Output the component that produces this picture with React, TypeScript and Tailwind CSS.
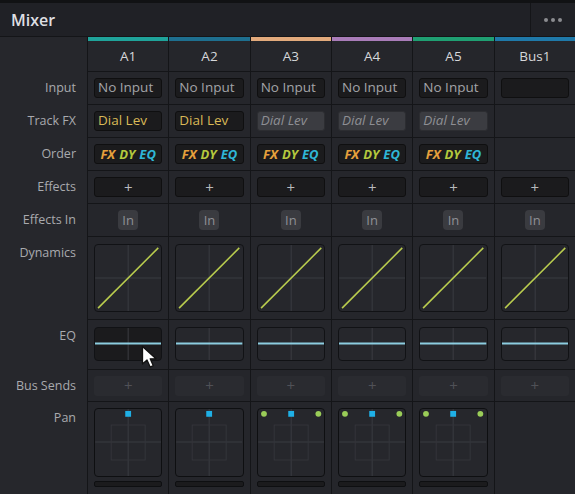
import React from "react"

type Channel = {
  name: string
  color: string
  input: string
  fx: "active" | "bypass" | "none"
  order: boolean
  pan: "mono" | "stereo" | "none"
}

const channels: Channel[] = [
  {name: "A1", color: "#1fa39a", input: "No Input", fx: "active", order: true, pan: "mono"},
  {name: "A2", color: "#1e6f8f", input: "No Input", fx: "active", order: true, pan: "mono"},
  {name: "A3", color: "#e2aa7c", input: "No Input", fx: "bypass", order: true, pan: "stereo"},
  {name: "A4", color: "#a97cb8", input: "No Input", fx: "bypass", order: true, pan: "stereo"},
  {name: "A5", color: "#1f9f72", input: "No Input", fx: "bypass", order: true, pan: "stereo"},
  {name: "Bus1", color: "#1f79a9", input: "", fx: "none", order: false, pan: "none"},
]

const Label = ({text, h}: {text?: string; h: string}) => (
  <div className={`${h} shrink-0`}>
    {text && (
      <div className="h-[32px] flex items-center justify-end pr-[11px] text-[12.5px] text-[#a9aaae]">{text}</div>
    )}
  </div>
)

const Dynamics = () => (
  <svg viewBox="0 0 68 68" className="w-full h-full">
    <line x1="34" y1="0" x2="34" y2="68" stroke="#3b3c42" strokeWidth="1" />
    <line x1="0" y1="34" x2="68" y2="34" stroke="#3b3c42" strokeWidth="1" />
    <line x1="3" y1="65" x2="65" y2="3" stroke="#b9cc4e" strokeWidth="1.6" />
  </svg>
)

const Eq = () => (
  <svg viewBox="0 0 68 34" className="w-full h-full" preserveAspectRatio="none">
    <line x1="34" y1="0" x2="34" y2="34" stroke="#3d3e44" strokeWidth="1" />
    <line x1="0" y1="16.5" x2="68" y2="16.5" stroke="#8ccde0" strokeWidth="2" />
  </svg>
)

const Pan = ({stereo}: {stereo: boolean}) => (
  <svg viewBox="0 0 68 69" className="w-full h-full">
    <line x1="34" y1="0" x2="34" y2="69" stroke="#3b3c42" strokeWidth="1" />
    <line x1="0" y1="34" x2="68" y2="34" stroke="#3b3c42" strokeWidth="1" />
    <rect x="16.5" y="16.5" width="35" height="36" fill="none" stroke="#34353b" strokeWidth="1" />
    <rect x="31" y="2" width="6" height="6" fill="#1fb0e6" />
    {stereo && (
      <>
        <circle cx="6" cy="5" r="3" fill="#9acd58" />
        <circle cx="62" cy="5" r="3" fill="#9acd58" />
      </>
    )}
  </svg>
)

// mouse pointer hovering the A1 EQ box
const Cursor = () => (
  <svg width="17" height="24" viewBox="0 0 17 24" className="absolute left-[141px] top-[345px]">
    <path d="M1.5 1.5 L1.5 19 L6 15 L9.2 22 L12.2 20.6 L9.2 13.8 L15 13.8 Z" fill="#ffffff" stroke="#111" strokeWidth="1.3" strokeLinejoin="round" />
  </svg>
)

const Column = ({c, first}: {c: Channel; first: boolean}) => {
  const cell = "bg-[#25262b] px-[6px] flex flex-col"
  return (
    <div className="flex flex-col gap-px bg-[#141518]">
      <div className="h-[34px] bg-[#25262b] flex flex-col">
        <div className="h-[4px]" style={{backgroundColor: c.color}} />
        <div className="flex-1 flex items-center justify-center text-[13.5px] text-[#d6d7da]">{c.name}</div>
      </div>
      <div className={`${cell} h-[32px] justify-center`}>
        <div className="h-[20px] rounded-[3px] bg-[#1b1b1d] border border-[#0f0f10] flex items-center pl-[3px] text-[13.5px] text-[#a3a4a8] leading-none">
          {c.input}
        </div>
      </div>
      <div className={`${cell} h-[32px] justify-center`}>
        {c.fx === "active" && (
          <div className="h-[20px] rounded-[3px] bg-[#1b1b1d] border border-[#0f0f10] flex items-center pl-[3px] text-[13.5px] text-[#d9b957] leading-none">
            Dial Lev
          </div>
        )}
        {c.fx === "bypass" && (
          <div className="h-[20px] rounded-[3px] bg-[#3b3c41] border border-[#2c2d31] flex items-center pl-[3px] text-[13.5px] italic text-[#8e8f94] leading-none">
            Dial Lev
          </div>
        )}
      </div>
      <div className={`${cell} h-[32px] justify-center`}>
        {c.order && (
          <div className="h-[20px] rounded-[3px] bg-[#1b1b1d] border border-[#0f0f10] flex items-center justify-center gap-[4px] text-[13px] italic font-bold leading-none">
            <span className="text-[#e6a03c]">FX</span>
            <span className="text-[#b4c83e]">DY</span>
            <span className="text-[#2fb6d6]">EQ</span>
          </div>
        )}
      </div>
      <div className={`${cell} h-[32px] justify-center`}>
        <div className="h-[20px] rounded-[3px] bg-[#1b1b1d] border border-[#0f0f10] flex items-center justify-center text-[15px] text-[#b8b9bc] leading-none">
          +
        </div>
      </div>
      <div className={`${cell} h-[32px] items-center justify-center`}>
        <div className="w-[20px] h-[20px] rounded-[4px] bg-[#3a3b40] flex items-center justify-center text-[13px] text-[#8f9095] leading-none">
          In
        </div>
      </div>
      <div className={`${cell} h-[82px] pt-[7px]`}>
        <div className="h-[68px] rounded-[4px] bg-[#26272c] border border-[#111215] overflow-hidden">
          <Dynamics />
        </div>
      </div>
      <div className={`${cell} h-[49px] pt-[7px]`}>
        <div className={`h-[34px] rounded-[4px] ${first ? "bg-[#1b1b1d]" : "bg-[#26272c]"} border border-[#111215] overflow-hidden`}>
          <Eq />
        </div>
      </div>
      <div className={`${cell} h-[31px] justify-center`}>
        <div className="h-[20px] rounded-[3px] bg-[#2a2b30] flex items-center justify-center text-[15px] text-[#505157] leading-none">
          +
        </div>
      </div>
      <div className={`${cell} flex-1 pt-[6px]`}>
        {c.pan !== "none" && (
          <>
            <div className="h-[69px] rounded-[4px] bg-[#26272c] border border-[#0e0f11] overflow-hidden">
              <Pan stereo={c.pan === "stereo"} />
            </div>
            <div className="mt-[4px] h-[6px] rounded-[2px] bg-[#1b1b1d] border border-[#0e0f11]" />
          </>
        )}
      </div>
    </div>
  )
}

export default function App() {
  return (
    <div className="relative w-[575px] h-[494px] overflow-hidden bg-[#141518] font-['Open_Sans',sans-serif] flex flex-col">
      <div className="h-[37px] shrink-0 flex border-t-[3px] border-t-[#111214] border-b border-b-[#141518] bg-[#202126]">
        <div className="flex-1 flex items-center pl-[11px] text-[16px] font-semibold text-[#dedfe2]">Mixer</div>
        <div className="w-[45px] border-l border-[#141518] flex items-center justify-center gap-[3px]">
          <span className="w-[4px] h-[4px] rounded-full bg-[#8b8c90]" />
          <span className="w-[4px] h-[4px] rounded-full bg-[#8b8c90]" />
          <span className="w-[4px] h-[4px] rounded-full bg-[#8b8c90]" />
        </div>
      </div>
      <div className="flex-1 flex gap-px">
        <div className="w-[87px] shrink-0 bg-[#26272c] flex flex-col gap-px">
          <Label h="h-[34px]" />
          <Label h="h-[32px]" text="Input" />
          <Label h="h-[32px]" text="Track FX" />
          <Label h="h-[32px]" text="Order" />
          <Label h="h-[32px]" text="Effects" />
          <Label h="h-[32px]" text="Effects In" />
          <Label h="h-[82px]" text="Dynamics" />
          <Label h="h-[49px]" text="EQ" />
          <Label h="h-[31px]" text="Bus Sends" />
          <Label h="h-[32px]" text="Pan" />
        </div>
        <div className="flex-1 grid grid-cols-6 gap-px">
          {channels.map((c, i) => (
            <Column key={c.name} c={c} first={i === 0} />
          ))}
        </div>
      </div>
      <Cursor />
    </div>
  )
}
